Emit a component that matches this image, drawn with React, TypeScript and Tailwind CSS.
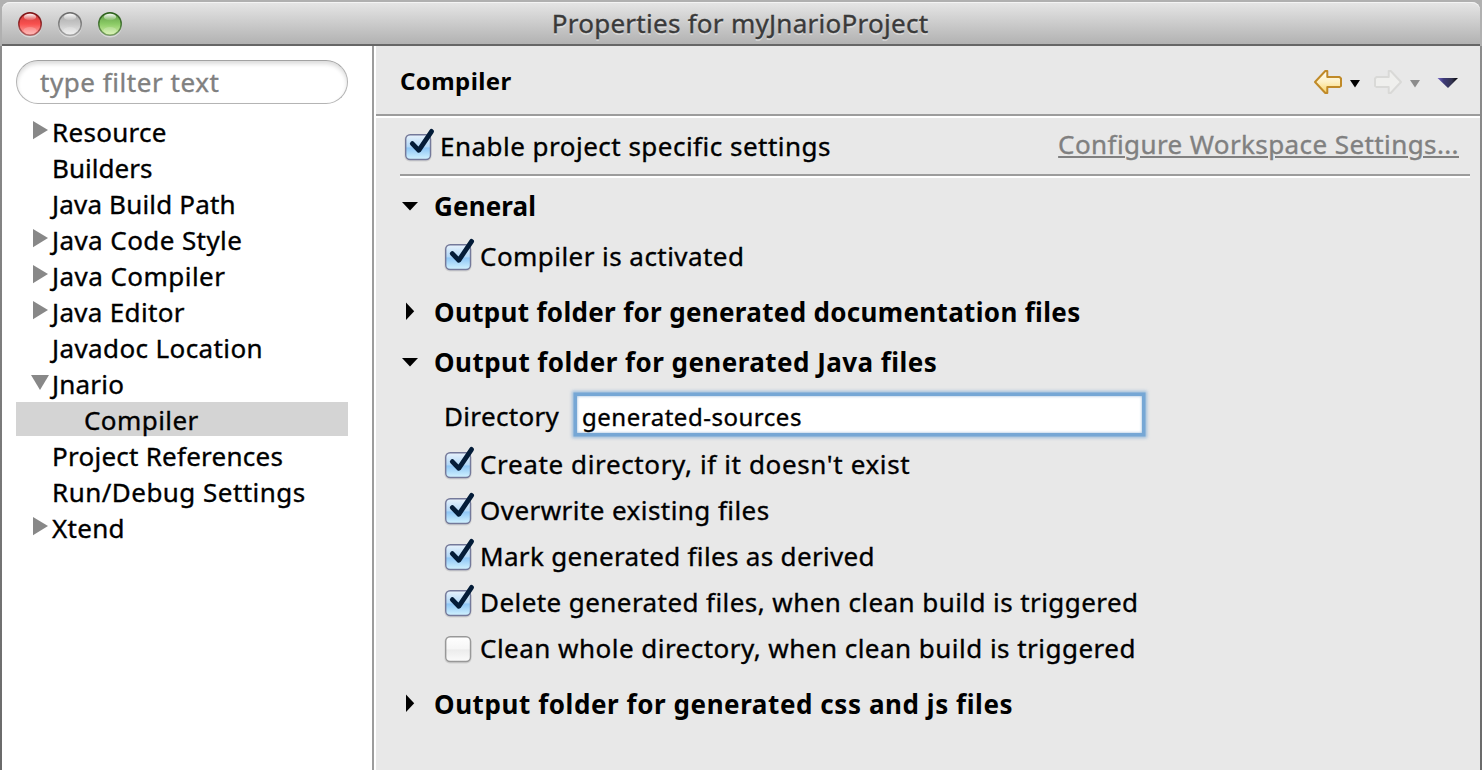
import React from "react";

type TreeItem = {
  label: string;
  state?: "open" | "closed";
  child?: boolean;
  selected?: boolean;
  spacing: string;
};

const tree: TreeItem[] = [
  { label: "Resource", state: "closed", spacing: "tracking-[0.28px]" },
  { label: "Builders", spacing: "tracking-[0.02px]" },
  { label: "Java Build Path", spacing: "tracking-[0.173px]" },
  { label: "Java Code Style", state: "closed", spacing: "tracking-[0.41px]" },
  { label: "Java Compiler", state: "closed", spacing: "tracking-[0.45px]" },
  { label: "Java Editor", state: "closed", spacing: "tracking-[0.32px]" },
  { label: "Javadoc Location", spacing: "tracking-[0.388px]" },
  { label: "Jnario", state: "open", spacing: "tracking-[0.2px]" },
  { label: "Compiler", child: true, selected: true, spacing: "tracking-[0.423px]" },
  { label: "Project References", spacing: "tracking-[0.25px]" },
  { label: "Run/Debug Settings", spacing: "tracking-[0.46px]" },
  { label: "Xtend", state: "closed", spacing: "tracking-[0.286px]" },
];

const javaOptions = [
  { label: "Create directory, if it doesn't exist", checked: true, spacing: "tracking-[0.63px]" },
  { label: "Overwrite existing files", checked: true, spacing: "tracking-[0.44px]" },
  { label: "Mark generated files as derived", checked: true, spacing: "tracking-[0.335px]" },
  { label: "Delete generated files, when clean build is triggered", checked: true, spacing: "tracking-[0.427px]" },
  { label: "Clean whole directory, when clean build is triggered", checked: false, spacing: "tracking-[0.474px]" },
];

function TrafficLight({ id, rim, top, mid, glow }: { id: string; rim: string; top: string; mid: string; glow: string }) {
  return (
    <svg width="26" height="28" viewBox="0 0 26 28" className="block">
      <defs>
        <linearGradient id={id} x1="0" y1="0" x2="0" y2="1">
          <stop offset="0" stopColor={top} />
          <stop offset="0.5" stopColor={mid} />
          <stop offset="1" stopColor={glow} />
        </linearGradient>
        <linearGradient id={id + "-rim"} x1="0" y1="0" x2="0" y2="1">
          <stop offset="0" stopColor={rim} />
          <stop offset="1" stopColor={rim} stopOpacity="0.55" />
        </linearGradient>
        <linearGradient id={id + "-shine"} x1="0" y1="0" x2="0" y2="1">
          <stop offset="0" stopColor="#fff" stopOpacity="0.95" />
          <stop offset="1" stopColor="#fff" stopOpacity="0.1" />
        </linearGradient>
      </defs>
      <circle cx="13" cy="14.5" r="12" fill="#fff" opacity="0.45" />
      <circle cx="13" cy="13" r="11.3" fill={"url(#" + id + ")"} stroke={"url(#" + id + "-rim)"} strokeWidth="1.5" />
      <ellipse cx="13" cy="6" rx="6.2" ry="3.2" fill={"url(#" + id + "-shine)"} />
      <ellipse cx="13" cy="19.5" rx="6.5" ry="3.4" fill="#fff" opacity="0.2" />
    </svg>
  );
}

function Checkbox({ checked }: { checked: boolean }) {
  return (
    <svg width="36" height="36" viewBox="0 0 36 36" className="block shrink-0">
      <defs>
        <linearGradient id="box-on" x1="0" y1="0" x2="0" y2="1">
          <stop offset="0" stopColor="#e9f3fc" />
          <stop offset="0.48" stopColor="#b3d8f7" />
          <stop offset="0.54" stopColor="#8fc6f5" />
          <stop offset="1" stopColor="#d3f3ff" />
        </linearGradient>
        <linearGradient id="box-off" x1="0" y1="0" x2="0" y2="1">
          <stop offset="0" stopColor="#ffffff" />
          <stop offset="0.48" stopColor="#f6f6f6" />
          <stop offset="0.54" stopColor="#ececec" />
          <stop offset="1" stopColor="#fbfbfb" />
        </linearGradient>
      </defs>
      <rect x="4.5" y="6.5" width="27" height="27" rx="5" fill="#000" opacity="0.1" />
      <rect
        x="5.7"
        y="6.7"
        width="24.8"
        height="24.8"
        rx="4.5"
        fill={checked ? "url(#box-on)" : "url(#box-off)"}
        stroke={checked ? "#74799a" : "#989898"}
        strokeWidth="1.4"
      />
      {checked && (
        <path d="M12.3 15.6 L18.8 22.3 L31.6 3.4" fill="none" stroke="#041c38" strokeWidth="4.8" strokeLinecap="round" strokeLinejoin="round" />
      )}
    </svg>
  );
}

function CheckRow({ label, checked, spacing }: { label: string; checked: boolean; spacing: string }) {
  return (
    <label className="flex h-9 items-center">
      <Checkbox checked={checked} />
      <span className={"pl-1 leading-9 " + spacing}>{label}</span>
    </label>
  );
}

function SectionTitle({ label, open, spacing }: { label: string; open?: boolean; spacing: string }) {
  return (
    <div className="flex h-9 items-center font-bold [-webkit-text-stroke:0px]">
      <svg width="34" height="36" viewBox="0 0 34 36" className="block shrink-0">
        {open ? <path d="M2 14 H18 L10 22.4 Z" /> : <path d="M6 8.5 L14.2 17.3 L6 26 Z" />}
      </svg>
      <h2 className={"leading-9 " + spacing}>{label}</h2>
    </div>
  );
}

function Sidebar() {
  return (
    <aside className="w-[370px] shrink-0 bg-white px-3.5 pt-3.5">
      <div className="flex h-11 w-[332px] items-center rounded-full border-[1.5px] border-[#b4b4b4] border-t-[#a2a2a2] bg-white pl-[23px] shadow-[inset_0_3px_4px_rgba(0,0,0,0.14)]">
        <span className="leading-9 tracking-[0.55px] text-[#808080]">type filter text</span>
      </div>
      <ul className="w-[332px] pt-2.5">
        {tree.map((item, i) => (
          <li key={i} className="h-9">
            <div className={"flex h-[34px] " + (item.selected ? "bg-[#d4d4d4]" : "")}>
              <svg width="36" height="34" viewBox="0 0 36 34" className="block shrink-0" fill="#888">
                {item.state === "closed" && <path d="M17 7 L32 16 L17 25.2 Z" />}
                {item.state === "open" && <path d="M15 9 H33 L24 24 Z" />}
              </svg>
              <span className={"leading-9 " + item.spacing + (item.child ? " pl-8" : "")}>{item.label}</span>
            </div>
          </li>
        ))}
      </ul>
    </aside>
  );
}

function HeaderTools() {
  return (
    <svg width="150" height="32" viewBox="0 0 150 32" className="block">
      <defs>
        <linearGradient id="back" x1="0" y1="0" x2="0" y2="1">
          <stop offset="0" stopColor="#fffdf4" />
          <stop offset="0.5" stopColor="#fdf0c4" />
          <stop offset="1" stopColor="#f9d468" />
        </linearGradient>
        <linearGradient id="menu" x1="0" y1="0" x2="1" y2="0">
          <stop offset="0" stopColor="#7466c8" />
          <stop offset="0.3" stopColor="#3d3a78" />
          <stop offset="0.7" stopColor="#33334f" />
          <stop offset="1" stopColor="#000" />
        </linearGradient>
      </defs>
      <path d="M5 16 L15.3 5 H17.3 V11 H29.5 L31 12.5 V20 L29.5 21 H17.3 V27 H15.3 Z" fill="url(#back)" stroke="#c08a28" strokeWidth="2" strokeLinejoin="round" />
      <path d="M40 14 H50 L45 21.6 Z" />
      <path d="M91 16 L80.7 5 H78.7 V11 H66.5 L65 12.5 V20 L66.5 21 H78.7 V27 H80.7 Z" fill="#efefed" stroke="#d9d9d7" strokeWidth="2" strokeLinejoin="round" />
      <path d="M100 14 H110 L105 21.6 Z" fill="#8c8c8c" />
      <path d="M127.5 12 H148 L138 22 Z" fill="url(#menu)" />
    </svg>
  );
}

export default function App() {
  return (
    <div className="flex h-[770px] w-[1482px] flex-col overflow-hidden whitespace-nowrap bg-[#b0b0b0] pt-0.5 font-['Noto_Sans',sans-serif] text-[26px] text-black [-webkit-text-stroke:0.35px]">
      <header className="mx-0.5 grid h-11 shrink-0 grid-cols-[1fr_auto_1fr] rounded-t-lg border-b-2 border-[#666] bg-linear-to-b from-[#e6e6e6] to-[#b2b2b2] shadow-[inset_0_1px_0_#f4f4f4]">
        <div className="flex gap-3.5 pl-[15px] pt-[9px]">
          <TrafficLight id="close" rim="#7c1416" top="#c93a3a" mid="#f8504e" glow="#ffb3b0" />
          <TrafficLight id="minimize" rim="#6c6c6c" top="#a9a9a9" mid="#c6c6c6" glow="#f0f0f0" />
          <TrafficLight id="zoom" rim="#2c5f1c" top="#5d9a44" mid="#8ccb66" glow="#d9f3ae" />
        </div>
        <h1 className="pr-0.5 pt-[3px] leading-9 tracking-[0.268px] text-[#3a3a3a] [text-shadow:0_2px_0_rgba(255,255,255,0.4)]">
          Properties for myJnarioProject
        </h1>
      </header>
      <div className="flex min-h-0 grow bg-linear-to-b from-[#8c8c8c] to-[#6a6a6a] px-0.5">
        <Sidebar />
        <div className="w-1 shrink-0 border-l-2 border-[#9c9c9c] bg-white" />
        <main className="min-w-0 grow bg-[#e8e8e8]">
          <div className="flex h-[70px] justify-between border-b-2 border-[#9c9c9c] pl-6 pt-4">
            <h2 className="pt-px text-[24px] font-bold leading-9 tracking-[0.42px] [-webkit-text-stroke:0px]">Compiler</h2>
            <div className="pr-[20px] pt-1">
              <HeaderTools />
            </div>
          </div>
          <div className="h-0.5 bg-white" />
          <div className="pl-6 pr-2.5">
            <div className="flex h-14 justify-between pt-2.5">
              <CheckRow label="Enable project specific settings" checked spacing="tracking-[0.483px]" />
              <a className="-mt-0.5 mr-[11px] leading-9 tracking-[0.404px] text-[#808080] underline decoration-2 underline-offset-[2px]">
                Configure Workspace Settings...
              </a>
            </div>
            <div className="h-1 border-t-2 border-[#9c9c9c] bg-white" />
            <section className="pt-2.5">
              <SectionTitle label="General" open spacing="tracking-[0.15px]" />
              <div className="pl-10 pt-3.5">
                <CheckRow label="Compiler is activated" checked spacing="tracking-[0.45px]" />
              </div>
            </section>
            <section className="pt-5">
              <SectionTitle label="Output folder for generated documentation files" spacing="tracking-[0.33px]" />
            </section>
            <section className="pt-3.5">
              <SectionTitle label="Output folder for generated Java files" open spacing="tracking-[0.46px]" />
              <div className="flex h-[66px] pl-11 pt-3">
                <span className="w-[133px] pt-1.5 leading-9 tracking-[0.33px]">Directory</span>
                <div className="mt-1 h-[37px] w-[565px] bg-white pl-[5px] pt-[3px] text-[24px] leading-9 tracking-[0.52px] shadow-[0_0_0_3.5px_#76a7d5,0_0_3px_5px_rgba(118,167,213,0.65),inset_0_0_3px_#8fb4d8]">
                  generated-sources
                </div>
              </div>
              <div className="flex flex-col gap-2.5 pl-10">
                {javaOptions.map((o) => (
                  <CheckRow key={o.label} {...o} />
                ))}
              </div>
            </section>
            <section className="pt-5">
              <SectionTitle label="Output folder for generated css and js files" spacing="tracking-[0.573px]" />
            </section>
          </div>
        </main>
      </div>
    </div>
  );
}
